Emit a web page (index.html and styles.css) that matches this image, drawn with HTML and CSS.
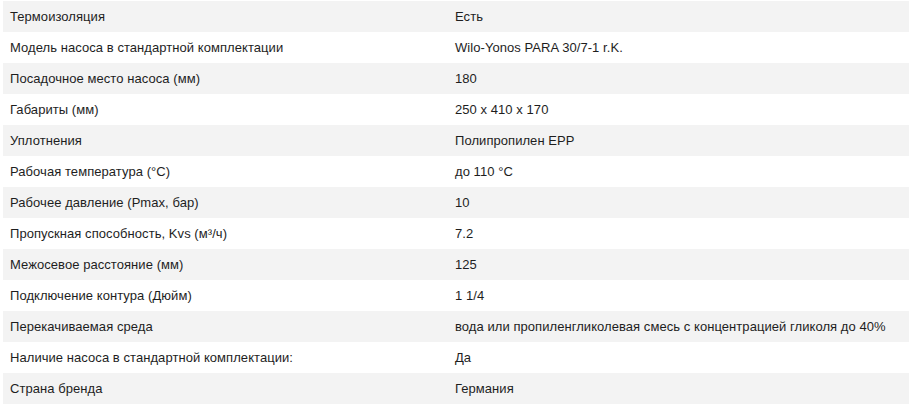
FILE: index.html
```html
<!DOCTYPE html>
<html lang="ru">
<head>
<meta charset="utf-8">
<link rel="stylesheet" href="styles.css">
</head>
<body>
<table class="specs">
<tbody>
<tr><td class="name">Термоизоляция</td><td class="val">Есть</td></tr>
<tr><td class="name">Модель насоса в стандартной комплектации</td><td class="val">Wilo-Yonos PARA 30/7-1 r.K.</td></tr>
<tr><td class="name">Посадочное место насоса (мм)</td><td class="val">180</td></tr>
<tr><td class="name">Габариты (мм)</td><td class="val">250 x 410 x 170</td></tr>
<tr><td class="name">Уплотнения</td><td class="val">Полипропилен EPP</td></tr>
<tr><td class="name">Рабочая температура (°C)</td><td class="val">до 110 °C</td></tr>
<tr><td class="name">Рабочее давление (Pmax, бар)</td><td class="val">10</td></tr>
<tr><td class="name">Пропускная способность, Kvs (м³/ч)</td><td class="val">7.2</td></tr>
<tr><td class="name">Межосевое расстояние (мм)</td><td class="val">125</td></tr>
<tr><td class="name">Подключение контура (Дюйм)</td><td class="val">1 1/4</td></tr>
<tr><td class="name">Перекачиваемая среда</td><td class="val">вода или пропиленгликолевая смесь с концентрацией гликоля до 40%</td></tr>
<tr><td class="name">Наличие насоса в стандартной комплектации:</td><td class="val">Да</td></tr>
<tr><td class="name">Страна бренда</td><td class="val">Германия</td></tr>
</tbody>
</table>
</body>
</html>
```
FILE: styles.css
```css
html, body {
  margin: 0;
  padding: 0;
  background: #ffffff;
}
body {
  padding: 1px 1px 0 3px;
  font-family: "Liberation Sans", Arial, sans-serif;
  font-size: 13px;
  letter-spacing: 0.06px;
  color: #1e1e1e;
}
.specs {
  width: 906px;
  border-collapse: collapse;
  table-layout: fixed;
}
.specs td {
  height: 31px;
  padding: 0 7px;
  vertical-align: middle;
  box-sizing: border-box;
  line-height: 16px;
}
.specs .name {
  width: 445px;
}
.specs tr:nth-child(odd) td {
  background: #f3f3f3;
}
```
